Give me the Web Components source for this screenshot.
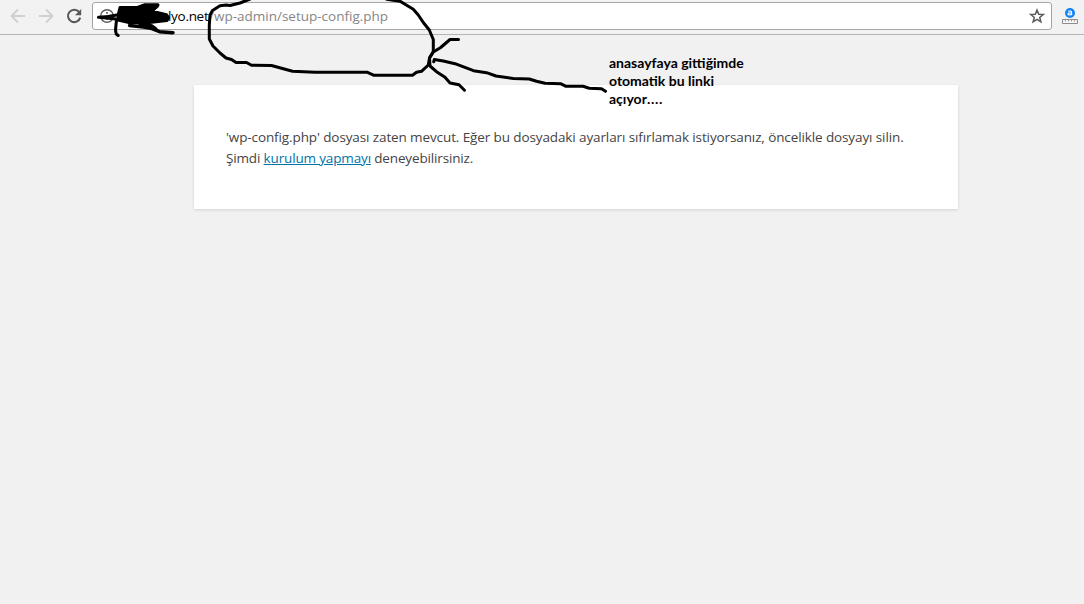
<!DOCTYPE html>
<html lang="tr">
<head>
<meta charset="utf-8">
<title>WordPress</title>
<style>
  html, body { margin: 0; height: 100%; }
  body { overflow: hidden; background: #f1f1f1; font-family: "Open Sans", "Noto Sans", sans-serif; }
</style>
</head>
<body>

<setup-page>
  <browser-toolbar slot="toolbar">
    <span slot="host">lyo.net</span>
    <span slot="path">/wp-admin/setup-config.php</span>
  </browser-toolbar>
  <message-card>
    'wp-config.php' dosyası zaten mevcut. Eğer bu dosyadaki ayarları sıfırlamak istiyorsanız, öncelikle dosyayı silin.
    <message-line slot="second">Şimdi <text-link>kurulum yapmayı</text-link> deneyebilirsiniz.</message-line>
  </message-card>
  <pen-marks slot="marks">anasayfaya gittiğimde<br>otomatik bu linki<br>açıyor<span style="letter-spacing: .7px">....</span></pen-marks>
</setup-page>

<script>
/**
 * Attaches an open shadow root holding the given markup.
 *
 * @param {string} name
 * @param {string} markup
 */
function defineElement(name, markup) {
  const template = document.createElement('template');
  template.innerHTML = markup.trim();

  customElements.define(name, class extends HTMLElement {
    constructor() {
      super();
      this.attachShadow({mode: 'open'}).append(template.content.cloneNode(true));
    }
  });
}

// PAGE //
defineElement('setup-page', `
  <style>
    :host { display: flex; flex-direction: column; position: relative; height: 100vh; }
    main { display: flex; flex-direction: column; padding: 50px 126px 0 194px; }
  </style>
  <slot name="toolbar"></slot>
  <main><slot></slot></main>
  <slot name="marks"></slot>
`);

// BROWSER TOOLBAR //
defineElement('browser-toolbar', `
  <style>
    :host {
      display: flex; align-items: center; box-sizing: border-box; height: 35px;
      padding: 0 5px 3px 10px; background: #f2f2f2; border-bottom: 1px solid #b4b4b4;
    }
    svg { display: block; flex: none; }
    nav { display: flex; gap: 12px; width: 82px; }
    .omnibox {
      display: flex; align-items: center; box-sizing: border-box; width: 960px; height: 28px; margin-top: 1px;
      padding: 0 6px; background: #fff; border: 1px solid #a5a5a5; border-radius: 3px;
    }
    .url { flex: 1; display: flex; padding-left: 53px; font-size: 13.5px; line-height: 20px; color: #000; white-space: nowrap; }
    .host { width: 41px; letter-spacing: -0.3px; }
    .path { color: #868686; letter-spacing: 0; }
    .extension { margin-left: 9px; }
  </style>
  <nav>
    <svg width="16" height="16" viewBox="0 0 16 16" fill="none" stroke="#d0d0d0" stroke-width="2"><path d="M15 8H2M8 1.5 1.5 8 8 14.5"/></svg>
    <svg width="16" height="16" viewBox="0 0 16 16" fill="none" stroke="#d0d0d0" stroke-width="2"><path d="M1 8h13M8 1.5 14.5 8 8 14.5"/></svg>
    <svg width="16" height="16" viewBox="0 0 16 16" fill="none" stroke="#5a5a5a" stroke-width="2.1"><path d="M13.2 4.2A6.2 6.2 0 1 0 14.2 9.6"/><path d="M15.2 1v6.2H9z" fill="#5a5a5a" stroke="none"/></svg>
  </nav>
  <div class="omnibox">
    <svg width="16" height="16" viewBox="0 0 16 16"><circle cx="8" cy="8" r="6.3" fill="none" stroke="#5a5a5a" stroke-width="1.4"/><path d="M7.2 4h1.7v1.7H7.2zM7.2 7h1.7v5H7.2z" fill="#5a5a5a"/></svg>
    <div class="url"><span class="host"><slot name="host"></slot></span><span class="path"><slot name="path"></slot></span></div>
    <svg width="16" height="16" viewBox="0 0 16 16" fill="none" stroke="#5a5a5a" stroke-width="1.5"><path d="m8 2 1.7 4.2 4.5.3-3.5 2.9 1.2 4.4L8 11.4l-3.9 2.4 1.2-4.4-3.5-2.9 4.5-.3z"/></svg>
  </div>
  <svg class="extension" width="18" height="18" viewBox="0 0 18 18">
    <circle cx="9" cy="6" r="5" fill="#1683f3"/>
    <path d="M7.2 4.4q3.4-1 3.4 1v2.8M10.6 6Q7 5.7 7 7.1q.3 1.6 3.6.1" fill="none" stroke="#fff" stroke-width="1.1"/>
    <path d="M1.5 12.5h15v4h-15z" fill="#f6f6f6" stroke="#8d8d8d"/>
    <path d="M4.5 13v1.500M7.5 13v1.500M10.5 13v1.500M13.5 13v1.500" stroke="#999"/>
  </svg>
`);

// MESSAGE CARD //
defineElement('message-card', `
  <style>
    :host {
      display: block; box-sizing: border-box; height: 124px; padding: 42px 32px 0; background: #fff;
      box-shadow: 0 1px 3px rgba(0, 0, 0, .13); color: #444; font-size: 13.5px; line-height: 21px;
      white-space: nowrap; letter-spacing: -0.11px;
    }
  </style>
  <div><slot></slot></div>
  <slot name="second"></slot>
`);

defineElement('message-line', `
  <style>:host { display: block; letter-spacing: -0.15px; }</style><slot></slot>
`);

defineElement('text-link', `
  <style>
    :host { color: #0073aa; text-decoration: underline; cursor: pointer; }
  </style><slot></slot>
`);

// PEN MARKS AND NOTE OVER THE PAGE //
defineElement('pen-marks', `
  <style>
    :host { position: absolute; inset: 0; pointer-events: none; }
    svg { position: absolute; inset: 0; }
    .note {
      position: absolute; left: 609px; top: 54px; white-space: nowrap;
      font: bold 14px/18px Lato, sans-serif; color: #000;
    }
  </style>
  <svg width="1084" height="604" fill="none" stroke="#000" stroke-width="3" stroke-linecap="round" stroke-linejoin="round">
    <path d="M250-1 240 3l-10 2.5-4-.5-6 .7-7.5 4.8-2.5 4.5-.7 10v14l3.700 7 7 7 6 5 5.500 1.500 4.500 3h10.500l5 2.800 20 .2 10 2.800 11 3 22.500 1h52.500l6.500 3h38.500l4-3 5-1 6.800-6.300 1.200-7 3.800-6.500v-12l-4-9.500-6-7.500-5-7.500-5-5.700-13.300-8.100-13.300-2"/>
    <path d="M458.500 39.500h-8.500l-9.300 8-7.400 4.500-3.800 6 .5 8 7.300 6.300 7.700 5 5 5.700 9 1.700 5.500 5.500"/>
    <path d="m433.700 61.800.6-2.300 9 1.500 11.700 2.700 18.500 7 13 2 9.500 3.300 17.300 2.500 16 .5 7.200 2.300 8.500 2 15.500.4 5.500 2.600h17l6.300 2 12.200.4 4 2.600"/>
    <path d="M118.500 13.500 120 7.500l18-.3 7-2.500h13l-.5 1.500-5.500 5 14.500 3.500 2 2.800-1.500 3-15.500 1.800-5 .7-17.500-.5-11-2.500z" fill="#000"/>
    <path d="m98.500 17.300 9.500-.8 9-1.500M98.500 17.300l20 2M116.500 20l-1 10 .7 4 2 1.500"/>
    <path d="m129.500 25.500 14 1.500 7 1.200 9 3.500 13.500 1M140 24l12 2 4 3" stroke-width="3.400"/>
  </svg>
  <div class="note"><slot></slot></div>
`);
</script>
</body>
</html>
